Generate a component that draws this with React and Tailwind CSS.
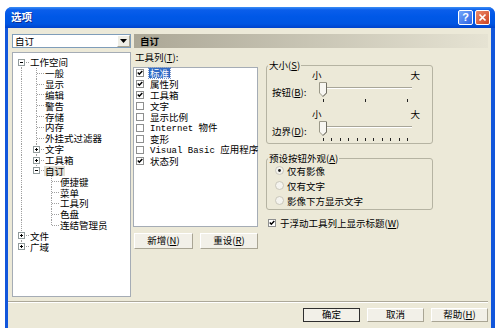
import React from 'react';

const LINE = '#A0A0A0';

// tree rows: cells describe the connector drawn in each 15px indent column
const treeRows = [
  { label: '工作空间', cells: ['first'], box: 'minus' },
  { label: '一般', cells: ['pipe', 'tee'] },
  { label: '显示', cells: ['pipe', 'tee'] },
  { label: '编辑', cells: ['pipe', 'tee'] },
  { label: '警告', cells: ['pipe', 'tee'] },
  { label: '存储', cells: ['pipe', 'tee'] },
  { label: '内存', cells: ['pipe', 'tee'] },
  { label: '外挂式过滤器', cells: ['pipe', 'tee'] },
  { label: '文字', cells: ['pipe', 'tee'], box: 'plus' },
  { label: '工具箱', cells: ['pipe', 'tee'], box: 'plus' },
  { label: '自订', cells: ['pipe', 'ell'], box: 'minus', selected: true },
  { label: '便捷键', cells: ['pipe', 'blank', 'tee'] },
  { label: '菜单', cells: ['pipe', 'blank', 'tee'] },
  { label: '工具列', cells: ['pipe', 'blank', 'tee'] },
  { label: '色盘', cells: ['pipe', 'blank', 'tee'] },
  { label: '连结管理员', cells: ['pipe', 'blank', 'ell'] },
  { label: '文件', cells: ['tee'], box: 'plus' },
  { label: '广域', cells: ['ell'], box: 'plus' },
];

const toolbars = [
  { label: '标准', checked: true, selected: true },
  { label: '属性列', checked: true },
  { label: '工具箱', checked: true },
  { label: '文字' },
  { label: '显示比例' },
  { latin: 'Internet ', label: '物件' },
  { label: '变形' },
  { latin: 'Visual Basic', label: '应用程序' },
  { label: '状态列', checked: true },
];

const TreeCell = ({ type, box }) => {
  const up = ['pipe', 'tee', 'ell'].includes(type);
  const down = ['pipe', 'tee', 'first'].includes(type);
  const right = ['tee', 'ell', 'first'].includes(type);
  return (
    <svg width="15" height="11" className="shrink-0 overflow-visible" shapeRendering="crispEdges">
      {up && <line x1="7.5" y1="0" x2="7.5" y2="5.5" stroke={LINE} strokeDasharray="1 1" />}
      {down && <line x1="7.5" y1="5.5" x2="7.5" y2="11" stroke={LINE} strokeDasharray="1 1" />}
      {right && <line x1="8" y1="5.5" x2="16" y2="5.5" stroke={LINE} strokeDasharray="1 1" />}
      {box && (
        <g>
          <rect x="4.5" y="2.5" width="6" height="6" fill="white" stroke="#919B9C" />
          <line x1="6" y1="5.5" x2="9" y2="5.5" stroke="#000" />
          {box === 'plus' && <line x1="7.5" y1="4" x2="7.5" y2="7" stroke="#000" />}
        </g>
      )}
    </svg>
  );
};

const CheckBox = ({ checked }) => (
  <svg width="8" height="8" className="shrink-0" shapeRendering="crispEdges">
    <rect x="0.5" y="0.5" width="7" height="7" fill="white" stroke="#8E8F8F" />
    {checked && (
      <path d="M1.8 3.6 L3.3 5.2 L6.3 2" fill="none" stroke="#000" strokeWidth="1.5" shapeRendering="auto" />
    )}
  </svg>
);

const Radio = ({ checked }) => (
  <svg width="9" height="9" className="shrink-0">
    <circle cx="4.5" cy="4.5" r="4" fill="#F4F3EE" stroke="#C9C7BA" />
    {checked && <circle cx="4.5" cy="4.5" r="1.4" fill="#1F1F1F" />}
  </svg>
);

const Slider = ({ ticks }) => {
  const xs = Array.from({ length: ticks }, (_, i) => 7 + (i * 84) / (ticks - 1));
  return (
    <svg width="104" height="22" className="shrink-0" shapeRendering="crispEdges">
      <line x1="7" y1="7.5" x2="96" y2="7.5" stroke="#A8A699" />
      <line x1="7" y1="8.5" x2="96" y2="8.5" stroke="#FFFFFF" />
      {xs.map((x) => (
        <line key={x} x1={Math.round(x) + 0.5} y1="19" x2={Math.round(x) + 0.5} y2="22" stroke="#222" />
      ))}
      <path d="M3.5 2.5 H10.5 V13 L7 16.5 L3.5 13 Z" fill="#F7F6F1" stroke="#9A9888" shapeRendering="auto" />
      <path d="M10.5 3 V13 L7 16.5" fill="none" stroke="#6F6D63" shapeRendering="auto" />
    </svg>
  );
};

const Button = ({ children, className = '', isDefault }) => (
  <div
    className={`flex items-center justify-center bg-[#F2F0E8] leading-none border ${
      isDefault
        ? 'border-[#2F2F2F]'
        : 'border-t-white border-l-white border-r-[#A9A594] border-b-[#A9A594]'
    } ${className}`}
  >
    {children}
  </div>
);

const Group = ({ title, className = '', children }) => (
  <div className={`rounded-[3px] border border-[#B5B3A2] ${className}`}>
    <div className="-mt-[6px] ml-[1px] px-[1px] w-fit bg-[#ECE9D8] leading-[10px] whitespace-nowrap">{title}</div>
    {children}
  </div>
);

const TitleBar = () => (
  <div className="h-[21px] shrink-0 flex items-center pl-[6px] pr-[5px] bg-[linear-gradient(to_bottom,#3D8FF5_0%,#0A5EEB_14%,#0058E7_45%,#0055E2_80%,#0043CC_100%)]">
    <span className="text-white font-bold text-[10.5px] leading-none [text-shadow:1px_1px_0_#0B2A8F]">选项</span>
    <div className="ml-auto flex gap-[2px]">
      <div className="w-[15px] h-[15px] rounded-[2px] border border-white bg-[linear-gradient(to_bottom_right,#75A6FA,#2B63E3)] flex items-center justify-center text-white font-bold text-[11px] leading-none font-['Liberation_Sans',sans-serif]">
        ?
      </div>
      <div className="w-[15px] h-[15px] rounded-[2px] border border-white bg-[linear-gradient(to_bottom_right,#EE8C6C,#CB4220)] flex items-center justify-center">
        <svg width="9" height="9">
          <path d="M1.5 1.5 L7.5 7.5 M7.5 1.5 L1.5 7.5" stroke="white" strokeWidth="1.7" />
        </svg>
      </div>
    </div>
  </div>
);

const Tree = () => (
  <div className="w-[119px] h-[245px] shrink-0 bg-white border border-[#A5ACB5] pt-[4px] pl-[1px]">
    {treeRows.map((row) => (
      <div key={row.label + row.cells.length} className="flex items-center h-[10.85px]">
        {row.cells.map((c, i) => (
          <TreeCell key={i} type={c} box={i === row.cells.length - 1 ? row.box : null} />
        ))}
        <span className={`px-[1px] leading-[10px] whitespace-nowrap ${row.selected ? 'bg-[#E3E1D6]' : ''}`}>
          {row.label}
        </span>
      </div>
    ))}
  </div>
);

const ToolbarList = () => (
  <div className="flex flex-col w-[125px]">
    <div className="h-[15px] leading-[10px] pl-[2px]">
      工具列(<u>T</u>):
    </div>
    <div className="h-[160px] bg-white border border-[#A5ACB5] pl-[2px]">
      {toolbars.map((t) => (
        <div key={t.label} className="flex items-center h-[10.9px] gap-[5px]">
          <CheckBox checked={t.checked} />
          <span
            className={`px-[1px] leading-[10px] whitespace-nowrap ${
              t.selected ? 'bg-[#316AC5] text-white outline outline-dotted outline-[#7A96C8]' : ''
            }`}
          >
            {t.latin && (
              <span className="font-['Liberation_Mono',monospace] text-[9px]">{t.latin} </span>
            )}
            {t.label}
          </span>
        </div>
      ))}
    </div>
    <div className="flex mt-[6px] pl-[1px] gap-[7px]">
      <Button className="w-[59px] h-[16px]">
        新增(<u>N</u>)
      </Button>
      <Button className="w-[58px] h-[16px]">
        重设(<u>R</u>)
      </Button>
    </div>
  </div>
);

const SizeRows = ({ label, ticks }) => (
  <>
    <div className="flex h-[9px] leading-[9px]">
      <span className="ml-[45px]">小</span>
      <span className="ml-[89px]">大</span>
    </div>
    <div className="flex h-[22px]">
      <span className="w-[49px] pl-[5px] mt-[8px] leading-[9px] whitespace-nowrap">{label}</span>
      <Slider ticks={ticks} />
    </div>
  </>
);

const Options = () => (
  <div className="flex flex-col w-[167px]">
    <Group className="mt-[13px] pb-[2px]" title={<>大小(<u>S</u>)</>}>
      <div className="flex flex-col pt-[1px]">
        <SizeRows label={<>按钮(<u>B</u>):</>} ticks={3} />
      </div>
      <div className="flex flex-col mt-[8px]">
        <SizeRows label={<>边界(<u>D</u>):</>} ticks={11} />
      </div>
    </Group>

    <Group className="mt-[14px] pb-[1px]" title={<>预设按钮外观(<u>A</u>)</>}>
      <div className="flex flex-col pl-[8px]">
        {['仅有影像', '仅有文字', '影像下方显示文字'].map((r, i) => (
          <div key={r} className="flex items-center h-[15px] gap-[3px]">
            <Radio checked={i === 0} />
            <span className="leading-[10px]">{r}</span>
          </div>
        ))}
      </div>
    </Group>

    <div className="flex items-center h-[11px] mt-[7px] pl-[2px] gap-[4px]">
      <CheckBox checked />
      <span className="leading-[10px] whitespace-nowrap">
        于浮动工具列上显示标题(<u>W</u>)
      </span>
    </div>
  </div>
);

export default function App() {
  return (
    <div className="w-[500px] h-[328px] bg-white pt-[7px] pl-[5px] overflow-hidden font-['Noto_Sans_CJK_SC',sans-serif] text-[9.5px] text-black">
      <div className="w-[490px] h-[321px] rounded-t-[7px] bg-[#1256DB] flex flex-col overflow-hidden">
        <TitleBar />
        <div className="flex-1 ml-[3px] mr-[4px] bg-[#ECE9D8] flex flex-col pr-[3px]">
          <div className="flex pl-[4px] pt-[6px] gap-[3px]">
            <div className="w-[119px] h-[14px] bg-white border border-[#7F9DB9] flex items-center">
              <span className="pl-[2px] flex-1 leading-[10px]">自订</span>
              <div className="w-[13px] h-[12px] bg-[#EEEDE5] border border-t-white border-l-white border-r-[#A9A594] border-b-[#A9A594] flex items-center justify-center">
                <svg width="7" height="4">
                  <path d="M0 0 H7 L3.5 4 Z" fill="#000" />
                </svg>
              </div>
            </div>
            <div className="flex-1 h-[14px] bg-[linear-gradient(to_right,#ABA796,#E6E3D3)] flex items-center pl-[6px] font-bold leading-[10px]">
              自订
            </div>
          </div>

          <div className="flex pl-[4px] mt-[4px] h-[245px]">
            <Tree />
            <div className="ml-[2px]">
              <ToolbarList />
            </div>
            <div className="ml-[8px]">
              <Options />
            </div>
          </div>

          <div className="mt-[4px] border-t border-t-[#ACA899] border-b border-b-white" />

          <div className="flex justify-end gap-[7px] mt-[5px]">
            <Button className="w-[57px] h-[14px]" isDefault>
              确定
            </Button>
            <Button className="w-[57px] h-[14px]">取消</Button>
            <Button className="w-[57px] h-[14px]">
              帮助(<u>H</u>)
            </Button>
          </div>
        </div>
      </div>
    </div>
  );
}
